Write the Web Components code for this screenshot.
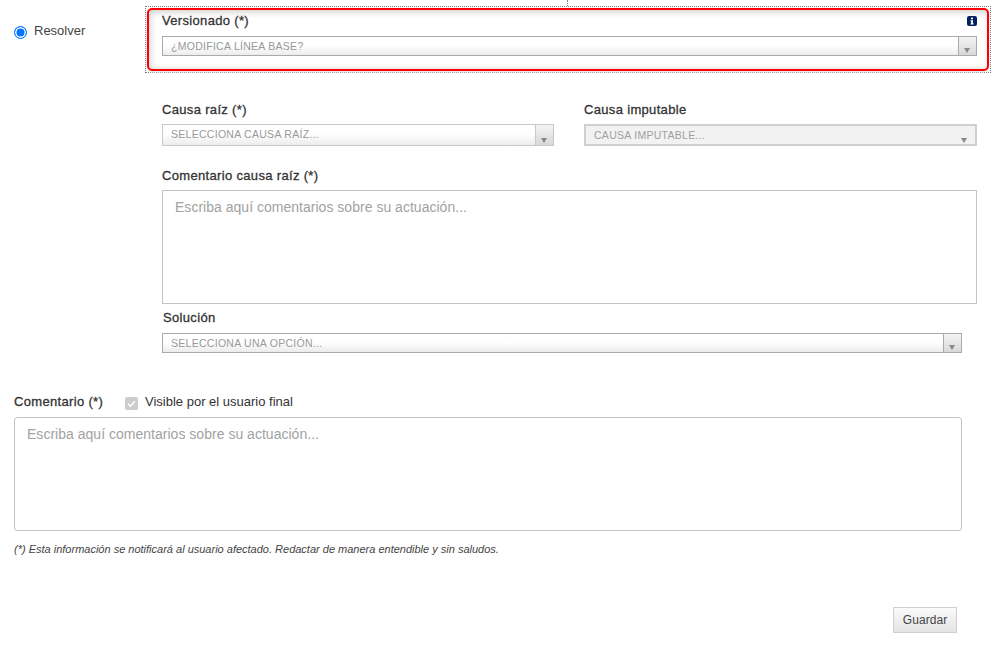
<!DOCTYPE html>
<html lang="es">
<head>
<meta charset="utf-8">
<title>Resolver</title>
<style>
  html, body { margin: 0; padding: 0; background: #fff; }
  body { font-family: "Liberation Sans", Arial, sans-serif; color: #333; width: 1001px; height: 646px; overflow: hidden; }
</style>
</head>
<body>
<resolve-form></resolve-form>

<script>
class FieldLabel extends HTMLElement {
    constructor() {
        super();
        this.attachShadow({ mode: 'open' });
        this.shadowRoot.innerHTML = `
            <style>
                :host { display: block; font-size: 13px; line-height: 16px; letter-spacing: 0.33px; color: #333; -webkit-text-stroke: 0.3px #333; }
            </style>
            <slot></slot>
        `;
    }
}

class ComboBox extends HTMLElement {
    constructor() {
        super();
        this.attachShadow({ mode: 'open' });
        const placeholder = this.getAttribute('placeholder') || '';
        this.shadowRoot.innerHTML = `
            <style>
                :host { display: block; height: 20px; font-size: 10.5px; }
                :host([tall]) { height: 22px; }
                .box {
                    display: flex; box-sizing: border-box; height: 100%;
                    border: 1px solid #aaa;
                    background: linear-gradient(#fff 0, #fff 45%, #ececec 100%);
                }
                .text { flex: 1; padding: 1px 0 0 8px; line-height: 17px; color: #999; letter-spacing: 0.28px; }
                :host([tall]) .box { border-color: #c8c8c8; }
                :host([tall]) .text { padding-top: 0; line-height: 18px; }
                .btn {
                    width: 17px; border-left: 1px solid #aaa; position: relative;
                    background: linear-gradient(#f4f4f4, #d8d8d8);
                }
                :host([tall]) .btn { border-left-color: #c8c8c8; }
                .btn::after {
                    content: ''; position: absolute; left: 5px; bottom: 2px;
                    border: 3.5px solid transparent; border-top: 5px solid #888; border-bottom: 0;
                }
                :host([disabled]) .box { border: 2px solid #cfcfcf; background: #f2f2f2; }
                :host([disabled]) .text { padding: 0 0 0 8px; line-height: 18px; color: #a0a0a0; }
                :host([disabled]) .btn { background: none; border: 0; width: 20px; }
                :host([disabled]) .btn::after { left: 6px; bottom: 1px; }
            </style>
            <div class="box">
                <div class="text">${placeholder}</div>
                <div class="btn"></div>
            </div>
        `;
    }
}

class NoteArea extends HTMLElement {
    constructor() {
        super();
        this.attachShadow({ mode: 'open' });
        const placeholder = this.getAttribute('placeholder') || '';
        this.shadowRoot.innerHTML = `
            <style>
                :host { display: block; height: 114px; }
                .area {
                    box-sizing: border-box; height: 100%;
                    border: 1px solid #c4c4c4; border-radius: var(--radius, 0);
                    padding: 8px 12px; font-size: 14px; line-height: 17px; color: #a2a2a2; letter-spacing: 0.02px;
                }
            </style>
            <div class="area">${placeholder}</div>
        `;
    }
}

class RadioOption extends HTMLElement {
    constructor() {
        super();
        this.attachShadow({ mode: 'open' });
        this.shadowRoot.innerHTML = `
            <style>
                :host { display: flex; align-items: center; gap: 7px; font-size: 13px; line-height: 16px; color: #444; }
                .dot {
                    box-sizing: border-box; width: 13px; height: 13px; border-radius: 50%;
                    border: 1.5px solid #0075ff; background: #0075ff; box-shadow: inset 0 0 0 1.5px #fff;
                    margin-top: 3px;
                }
            </style>
            <span class="dot"></span><slot></slot>
        `;
    }
}

class CheckOption extends HTMLElement {
    constructor() {
        super();
        this.attachShadow({ mode: 'open' });
        this.shadowRoot.innerHTML = `
            <style>
                :host { display: flex; align-items: center; gap: 7px; font-size: 13px; line-height: 16px; color: #333; }
                .box {
                    width: 13px; height: 13px; border-radius: 2px; background: #cdcdcd;
                    display: block; margin-top: 2px;
                }
            </style>
            <svg class="box" viewBox="0 0 13 13">
                <path d="M3 6.8l2.4 2.4L10 4.2" fill="none" stroke="#fff" stroke-width="1.6"/>
            </svg>
            <slot></slot>
        `;
    }
}

class ActionButton extends HTMLElement {
    constructor() {
        super();
        this.attachShadow({ mode: 'open' });
        this.shadowRoot.innerHTML = `
            <style>
                :host {
                    display: flex; align-items: center; justify-content: center; box-sizing: border-box;
                    width: 64px; height: 26px; font-size: 12px; letter-spacing: 0.05px; color: #444;
                    border: 1px solid #d0d0d0;
                    background: linear-gradient(#fafafa, #e4e4e4);
                }
            </style>
            <slot></slot>
        `;
    }
}

class InfoIcon extends HTMLElement {
    constructor() {
        super();
        this.attachShadow({ mode: 'open' });
        this.shadowRoot.innerHTML = `
            <style>
                :host { display: block; width: 10px; height: 10px; }
                svg { display: block; }
            </style>
            <svg width="10" height="10" viewBox="0 0 10 10">
                <rect width="10" height="10" rx="2" fill="#03215f"/>
                <rect x="4" y="1.6" width="2" height="1.7" fill="#fff"/>
                <path d="M3.4 4.2H6v3.2h.7v1H3.4v-1h.7V5.2h-.7z" fill="#fff"/>
            </svg>
        `;
    }
}

class ResolveForm extends HTMLElement {
    constructor() {
        super();
        this.attachShadow({ mode: 'open' });
        this.shadowRoot.innerHTML = `
            <style>
                :host { display: block; position: relative; height: 646px; }
                .top { display: flex; }
                .left { width: 145px; flex: none; padding: 23px 0 0 14px; box-sizing: border-box; }
                .right { width: 846px; flex: none; padding-top: 6px; }
                .guide {
                    position: absolute; left: 567px; top: 0; height: 6px;
                    border-left: 1px dotted #888;
                }
                .callout {
                    box-sizing: border-box; height: 67px;
                    border: 1px dotted #777; padding: 1px;
                }
                .callout-in {
                    box-sizing: border-box; height: 100%;
                    border: 2px solid #f00; border-radius: 5px;
                    box-shadow: inset 0 5px 7px -3px #d0d0d0, inset 5px 0 6px -3px #dcdcdc, inset 0 -4px 5px -3px #e4e4e4, 0 1px 3px #e0e0e0;
                    padding: 3px 10px 0 13px;
                }
                .callout-head { display: flex; justify-content: space-between; align-items: center; height: 16px; margin-bottom: 7px; }
                .pair { display: flex; gap: 30px; margin: 29px 0 0 17px; width: 815px; }
                .pair > div { flex: 1 1 393px; }
                .pair > div:first-child { flex: 0 0 392px; }
                .pair field-label { margin-bottom: 6px; }
                .block { margin: 22px 0 0 17px; width: 815px; }
                .block field-label { margin-bottom: 6px; }
                .sol { margin: 6px 0 0 17px; width: 800px; }
                .sol field-label { margin: 0 0 7px 1px; }
                .bottom { margin: 41px 0 0 14px; width: 948px; --radius: 3px; }
                .bottom-head { display: flex; align-items: center; height: 16px; margin-bottom: 7px; }
                .bottom-head field-label { width: 111px; }
                .note { margin-top: 12px; font-size: 11px; line-height: 13px; font-style: italic; color: #444; }
                .actions { display: flex; justify-content: flex-end; width: 943px; margin: 51px 0 0 14px; }
            </style>
            <div class="guide"></div>
            <div class="top">
                <div class="left"><radio-option>Resolver</radio-option></div>
                <div class="right">
                    <div class="callout">
                        <div class="callout-in">
                            <div class="callout-head">
                                <field-label>Versionado (*)</field-label>
                                <info-icon></info-icon>
                            </div>
                            <combo-box placeholder="¿MODIFICA LÍNEA BASE?"></combo-box>
                        </div>
                    </div>
                    <div class="pair">
                        <div>
                            <field-label>Causa raíz (*)</field-label>
                            <combo-box tall placeholder="SELECCIONA CAUSA RAÍZ..."></combo-box>
                        </div>
                        <div>
                            <field-label>Causa imputable</field-label>
                            <combo-box tall disabled placeholder="CAUSA IMPUTABLE..."></combo-box>
                        </div>
                    </div>
                    <div class="block">
                        <field-label>Comentario causa raíz (*)</field-label>
                        <note-area placeholder="Escriba aquí comentarios sobre su actuación..."></note-area>
                    </div>
                    <div class="sol">
                        <field-label>Solución</field-label>
                        <combo-box placeholder="SELECCIONA UNA OPCIÓN..."></combo-box>
                    </div>
                </div>
            </div>
            <div class="bottom">
                <div class="bottom-head">
                    <field-label>Comentario (*)</field-label>
                    <check-option>Visible por el usuario final</check-option>
                </div>
                <note-area placeholder="Escriba aquí comentarios sobre su actuación..."></note-area>
                <div class="note">(*) Esta información se notificará al usuario afectado. Redactar de manera entendible y sin saludos.</div>
            </div>
            <div class="actions"><action-button>Guardar</action-button></div>
        `;
    }
}

customElements.define('field-label', FieldLabel);
customElements.define('combo-box', ComboBox);
customElements.define('note-area', NoteArea);
customElements.define('radio-option', RadioOption);
customElements.define('check-option', CheckOption);
customElements.define('action-button', ActionButton);
customElements.define('info-icon', InfoIcon);
customElements.define('resolve-form', ResolveForm);
</script>
</body>
</html>
